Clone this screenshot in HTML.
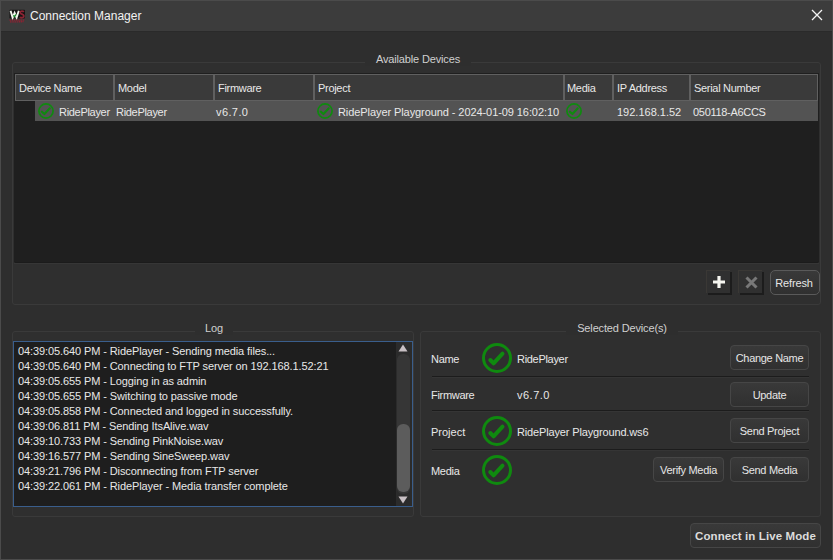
<!DOCTYPE html>
<html><head><meta charset="utf-8">
<style>
*{margin:0;padding:0;box-sizing:border-box}
html,body{width:833px;height:560px;overflow:hidden;background:#2e2e2e}
body{position:relative;font-family:"Liberation Sans",sans-serif;font-size:11px;color:#e8e8e8}
.a{position:absolute}
.t{position:absolute;white-space:nowrap;line-height:13px;letter-spacing:-0.3px}
#win{left:0;top:0;width:833px;height:560px;border:1px solid #4b4b4b;background:#2e2e2e}
#title{left:1px;top:1px;width:831px;height:30px;background:#3c3c3c}
.grp{position:absolute;border:1px solid #3a3a3a;border-radius:3px;background:#2f2f2f}
.gt{position:absolute;background:#2e2e2e;color:#d0d0d0;text-align:center;white-space:nowrap;line-height:13px;letter-spacing:-0.15px}
.hd{position:absolute;top:74px;height:27px;border:1px solid #606060;background:#3a3a3a}
.hd span{position:absolute;left:3px;top:7px;white-space:nowrap;line-height:13px;letter-spacing:-0.3px}
.btn{position:absolute;border:1px solid #464646;border-radius:4px;background:linear-gradient(#393939,#303030);text-align:center;line-height:24px;color:#e6e6e6;white-space:nowrap;letter-spacing:-0.3px}
.sep{position:absolute;left:432px;width:377px;height:2px;border-top:1px solid #1c1c1c;border-bottom:1px solid #353535}
.tb{position:absolute;width:24px;height:23px;background:#303030;border-top:1px solid #3a3835;border-left:1px solid #3a3835;box-shadow:2px 2px 0 #1c1c1c}
</style></head><body>
<div id="win" class="a"></div>
<div id="title" class="a"></div>
<div class="a" style="left:1px;top:31px;width:831px;height:1px;background:#2a2a2a"></div>
<svg class="a" style="left:9px;top:9px" width="17" height="15" viewBox="0 0 17 15">
 <rect x="0.5" y="0.8" width="15.5" height="8.8" rx="0.8" fill="#141414"/>
 <path d="M1.6 1.8 L3.6 8.6 L5.6 4.0 L7.6 8.6 L9.8 1.8" fill="none" stroke="#f2f6ee" stroke-width="1.9"/>
 <path d="M4.3 6.4 l1.1 1.3 l1.8 -2.4" fill="none" stroke="#1a8a2a" stroke-width="1.3"/>
 <path d="M14.8 3 C14 1.9 11.3 1.8 11.2 3.6 C11.1 5.4 14.9 5 14.9 7 C14.9 9 12 9.1 10.8 8.1" fill="none" stroke="#8c2433" stroke-width="1.8"/>
 <path d="M0.4 11.2 L15.8 11 M1 12.9 L14.8 12.7" stroke="#8c2232" stroke-width="1.3" stroke-dasharray="1.6 0.6"/>
</svg>
<div class="t" style="left:30px;top:9px;font-size:12px;line-height:15px;color:#f2f2f2;letter-spacing:0">Connection Manager</div>
<svg class="a" style="left:811px;top:9px" width="12" height="12" viewBox="0 0 12 12"><path d="M1 1 L11 11 M11 1 L1 11" stroke="#f4f4f4" stroke-width="1.3"/></svg>

<div class="grp" style="left:12px;top:62px;width:809px;height:243px"></div>
<div class="gt" style="left:365px;top:53px;width:106px">Available Devices</div>
<div class="a" style="left:14px;top:73px;width:805px;height:190px;background:#1f1f1f;border-bottom:1px solid #1b1b1b;border-radius:0 0 2px 2px"></div>
<div class="a" style="left:14px;top:263px;width:805px;height:1px;background:#363636"></div>
<div class="hd" style="left:15px;width:99px"><span>Device Name</span></div>
<div class="hd" style="left:114px;width:100px"><span>Model</span></div>
<div class="hd" style="left:214px;width:100px"><span>Firmware</span></div>
<div class="hd" style="left:314px;width:250px"><span>Project</span></div>
<div class="hd" style="left:564px;width:49px"><span style="left:2px">Media</span></div>
<div class="hd" style="left:613px;width:77px"><span>IP Address</span></div>
<div class="hd" style="left:690px;width:128px"><span>Serial Number</span></div>
<div class="a" style="left:35px;top:101px;width:783px;height:20px;background:#535353"></div>
<svg class="a" style="left:38px;top:103px" width="16" height="16" viewBox="0 0 16 16"><circle cx="8" cy="8" r="7.1" fill="none" stroke="#0f8a0f" stroke-width="1.7"/><path d="M3.9 8.7 L6.4 11 L11.6 5.4" fill="none" stroke="#0f8a0f" stroke-width="2.2" stroke-linecap="round" stroke-linejoin="round"/></svg>
<div class="t" style="left:59px;top:106px">RidePlayer</div>
<div class="t" style="left:116px;top:106px">RidePlayer</div>
<div class="t" style="left:216px;top:106px;letter-spacing:0.4px">v6.7.0</div>
<svg class="a" style="left:317px;top:103px" width="16" height="16" viewBox="0 0 16 16"><circle cx="8" cy="8" r="7.1" fill="none" stroke="#0f8a0f" stroke-width="1.7"/><path d="M3.9 8.7 L6.4 11 L11.6 5.4" fill="none" stroke="#0f8a0f" stroke-width="2.2" stroke-linecap="round" stroke-linejoin="round"/></svg>
<div class="t" style="left:338px;top:106px;letter-spacing:-0.08px">RidePlayer Playground - 2024-01-09 16:02:10</div>
<svg class="a" style="left:566px;top:103px" width="16" height="16" viewBox="0 0 16 16"><circle cx="8" cy="8" r="7.1" fill="none" stroke="#0f8a0f" stroke-width="1.7"/><path d="M3.9 8.7 L6.4 11 L11.6 5.4" fill="none" stroke="#0f8a0f" stroke-width="2.2" stroke-linecap="round" stroke-linejoin="round"/></svg>
<div class="t" style="left:617px;top:106px;letter-spacing:0">192.168.1.52</div>
<div class="t" style="left:693px;top:106px;letter-spacing:-0.3px">050118-A6CCS</div>

<div class="tb" style="left:706px;top:270px"></div>
<svg class="a" style="left:712px;top:275px" width="14" height="14" viewBox="0 0 14 14"><path d="M7 1 V13 M1 7 H13" stroke="#f6f6f0" stroke-width="3.2"/></svg>
<div class="tb" style="left:738px;top:270px"></div>
<svg class="a" style="left:745px;top:276px" width="13" height="13" viewBox="0 0 13 13"><path d="M1.5 1.5 L11.5 11.5 M11.5 1.5 L1.5 11.5" stroke="#787878" stroke-width="3"/></svg>
<div class="btn" style="left:770px;top:270px;width:50px;height:25px;border-color:#5a5a5a;border-radius:5px;letter-spacing:-0.15px;padding-right:2px">Refresh</div>

<div class="grp" style="left:12px;top:331px;width:402px;height:186px"></div>
<div class="gt" style="left:195px;top:322px;width:38px">Log</div>
<div class="a" style="left:13px;top:341px;width:400px;height:166px;background:#1e1e1e;border:1px solid #3a5e8c"></div>
<div class="a" style="left:396px;top:342px;width:16px;height:164px;background:#2b2b2b"></div>
<div class="a" style="left:397px;top:354px;width:13px;height:140px;background:#363636;border-radius:6px"></div>
<div class="a" style="left:397px;top:424px;width:13px;height:68px;background:#5c5c5c;border-radius:6px"></div>
<svg class="a" style="left:398px;top:344px" width="10" height="8" viewBox="0 0 10 8"><path d="M5 0.5 L9.5 7.5 H0.5 Z" fill="#c8c0c4"/></svg>
<svg class="a" style="left:398px;top:496px" width="10" height="8" viewBox="0 0 10 8"><path d="M0.5 0.5 H9.5 L5 7.5 Z" fill="#c8c0c4"/></svg>
<div class="a" style="left:18px;top:344px;line-height:15px;white-space:pre;letter-spacing:-0.1px">04:39:05.640 PM - RidePlayer - Sending media files...
04:39:05.640 PM - Connecting to FTP server on 192.168.1.52:21
04:39:05.655 PM - Logging in as admin
04:39:05.655 PM - Switching to passive mode
04:39:05.858 PM - Connected and logged in successfully.
04:39:06.811 PM - Sending ItsAlive.wav
04:39:10.733 PM - Sending PinkNoise.wav
04:39:16.577 PM - Sending SineSweep.wav
04:39:21.796 PM - Disconnecting from FTP server
04:39:22.061 PM - RidePlayer - Media transfer complete</div>

<div class="grp" style="left:420px;top:331px;width:401px;height:186px"></div>
<div class="gt" style="left:566px;top:322px;width:112px">Selected Device(s)</div>
<div class="t" style="left:431px;top:353px">Name</div>
<svg class="a" style="left:482px;top:343px" width="30" height="30" viewBox="0 0 30 30"><circle cx="15" cy="15" r="13.5" fill="none" stroke="#0f8a0f" stroke-width="3"/><path d="M8.3 17 L11.6 20.3 L20.5 10.6" fill="none" stroke="#0f8a0f" stroke-width="4" stroke-linecap="round" stroke-linejoin="round"/></svg>
<div class="t" style="left:517px;top:353px">RidePlayer</div>
<div class="btn" style="left:730px;top:345px;width:79px;height:25px">Change Name</div>
<div class="sep" style="top:376px"></div>
<div class="t" style="left:431px;top:389px">Firmware</div>
<div class="t" style="left:517px;top:389px;letter-spacing:0.5px">v6.7.0</div>
<div class="btn" style="left:730px;top:382px;width:79px;height:25px">Update</div>
<div class="sep" style="top:410px"></div>
<div class="t" style="left:431px;top:426px;letter-spacing:0">Project</div>
<svg class="a" style="left:482px;top:416px" width="30" height="30" viewBox="0 0 30 30"><circle cx="15" cy="15" r="13.5" fill="none" stroke="#0f8a0f" stroke-width="3"/><path d="M8.3 17 L11.6 20.3 L20.5 10.6" fill="none" stroke="#0f8a0f" stroke-width="4" stroke-linecap="round" stroke-linejoin="round"/></svg>
<div class="t" style="left:517px;top:426px;letter-spacing:-0.15px">RidePlayer Playground.ws6</div>
<div class="btn" style="left:730px;top:418px;width:79px;height:25px">Send Project</div>
<div class="sep" style="top:449px"></div>
<div class="t" style="left:431px;top:465px">Media</div>
<svg class="a" style="left:482px;top:455px" width="30" height="30" viewBox="0 0 30 30"><circle cx="15" cy="15" r="13.5" fill="none" stroke="#0f8a0f" stroke-width="3"/><path d="M8.3 17 L11.6 20.3 L20.5 10.6" fill="none" stroke="#0f8a0f" stroke-width="4" stroke-linecap="round" stroke-linejoin="round"/></svg>
<div class="btn" style="left:653px;top:457px;width:71px;height:25px">Verify Media</div>
<div class="btn" style="left:730px;top:457px;width:79px;height:25px">Send Media</div>

<div class="btn" style="left:690px;top:523px;width:131px;height:25px;font-weight:bold;font-size:11.5px;color:#dcdcdc;line-height:25px;letter-spacing:0.1px">Connect in Live Mode</div>
</body></html>
